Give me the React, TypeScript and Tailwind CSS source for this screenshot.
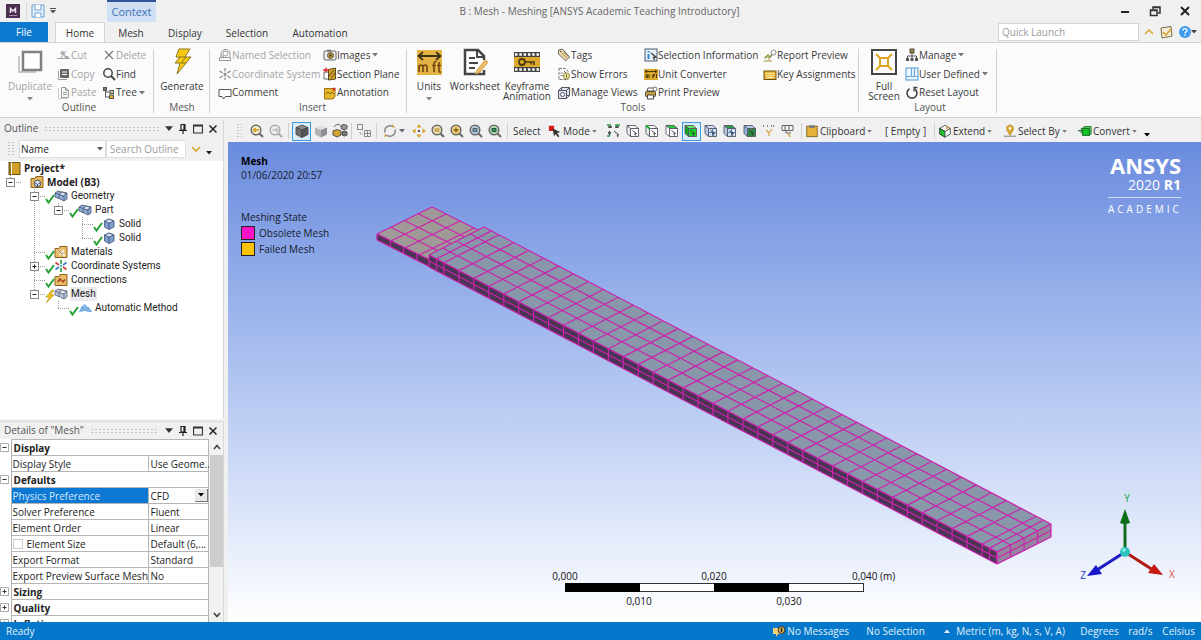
import React from "react";
import clsx from "clsx";

// 14 x 14 glyphs for the ribbon and the tree
const glyphs: Record<string, React.ReactNode> = {
  cut: <g stroke="#a3a3a3" fill="none"><path d="M0 10.500h13M4 10l5-7M8 9 6 4" /><circle cx="5.500" cy="5" r="1.500" fill="#b5b5b5" /><path d="M8 8.500l3.500 1" strokeWidth="2" /></g>,
  copy: <g><path d="M1.500 4v8.500H10" stroke="#999" fill="none" /><rect x="3" y="2" width="9" height="9" rx="1" fill="#666" /><path d="M5 5h5M5 7.500h5" stroke="#fff" /></g>,
  paste: <g fill="none" stroke="#999"><path d="M1.500 2v10.500H10" stroke="#ccc" /><path d="M4.500 1.500h4l3 3v7h-7zM8.500 1.500v3h3M6 6.500h4M6 8.500h4" /></g>,
  del: <path d="M3 3l8 8M11 3l-8 8" stroke="#777" strokeWidth="1.200" />,
  find: <g fill="none" stroke="#444" strokeWidth="1.500"><circle cx="6" cy="6" r="4.200" /><path d="M9 9l4 4" strokeWidth="2" /></g>,
  tree: <g fill="none" stroke="#555"><path d="M3.500 3v8H7M3.500 6H9" /><rect x="1.500" y="1.500" width="3" height="3" fill="#777" /><rect x="8" y="4.500" width="3.500" height="3" fill="#cfd8a0" /><rect x="7.500" y="9" width="4" height="3.500" fill="#e2ab21" /></g>,
  named: <g fill="none" stroke="#999"><path d="M1.500 9.500h11v3h-11zM3 9V4l3-2.500h3L12 4v5" /><circle cx="7.500" cy="5.500" r="2.500" /><path d="M3 7l3 2" /></g>,
  axes: <g stroke="#888" strokeWidth="1.200"><path d="M7 1v12M1.500 4l11 7M12.500 4l-11 7" strokeDasharray="3.500 1.200" /></g>,
  comment: <path d="M1 3.500h12v7H7.500l-2 2.500-1.500-2.500H1z" fill="#fff" stroke="#555" />,
  images: <g><rect x="1" y="3" width="12" height="9" rx="1" fill="#eee" stroke="#666" /><path d="M4 2.500h4" stroke="#666" strokeWidth="1.500" /><circle cx="7.500" cy="7.500" r="3" fill="#c99b2c" stroke="#555" /><circle cx="7.500" cy="7.500" r="1.200" fill="#444" /></g>,
  section: <g><path d="M1 5h5v7H1z" fill="#fff" stroke="#666" /><path d="M5.500 2.500L12.500 1v11l-7 1z" fill="#d6a12c" stroke="#5c4a20" /><path d="M6 9l5-6M8 11l4-5" stroke="#5c4a20" /><path d="M0 3h6M3 .5v5" stroke="#d22" strokeWidth="1.300" /></g>,
  annotation: <g><path d="M1.500 2.500h10.500v8l-2 2.500h-8.500z" fill="#e4b528" stroke="#9a7415" /><path d="M3 8l2-2 2 2 2-2 2 2" fill="none" stroke="#8a6509" /><circle cx="11" cy="3" r="1.500" fill="#d22" /></g>,
  tags: <g><path d="M1.500 2l4-1 7 8-4 4-7-7z" fill="#ead8a5" stroke="#666" /><path d="M5 5l4.500 5M7 4l4 4.500" stroke="#9a8a55" /><circle cx="3.800" cy="3.500" r=".8" fill="#555" /></g>,
  errors: <g><path d="M2 1.500h6.500l2.500 3v8H2z" fill="#fff" stroke="#777" strokeDasharray="3 1" /><path d="M3.500 6h3M3.500 8.500h3" stroke="#888" /><circle cx="9.500" cy="9" r="3" fill="#f3e5a8" stroke="#9b8a3a" /><path d="M9.500 7.500v3M7 4l2 2" stroke="#55702b" /></g>,
  views: <g fill="#dce3ec" stroke="#556"><path d="M4.500 1.500h8v8h-8z" /><path d="M1.500 4.500h8v8h-8zM1.500 4.500l3-3M9.500 4.500l3-3M9.500 12.500l3-3" /><circle cx="5.500" cy="8.500" r="2" fill="#fff" /></g>,
  info: <g><rect x="1" y="1" width="12" height="12" fill="#e6f1fb" stroke="#4a5a6a" /><path d="M4.500 6v5M4.500 3v1.500" stroke="#2f87d6" strokeWidth="2" /><path d="M7 5l5 4-2.500.300 1 2.700" fill="none" stroke="#333" strokeWidth="1.200" /></g>,
  convert: <g><rect x="0" y="2" width="14" height="11" fill="#dba82c" /><path d="M1 4.500h12M3 3L1 4.500 3 6M11 3l2 1.500L11 6M2 11V8h3v3M3.500 8v3M9 11V7.500h2M8 9h3M12.500 7v4" fill="none" stroke="#4b3808" /></g>,
  print: <g><path d="M4 2h6l1 3H3z" fill="#fff" stroke="#555" /><rect x="1.500" y="5.500" width="10" height="5" rx="1" fill="#c9a23a" stroke="#444" /><path d="M3.500 9h6v4h-6z" fill="#fff" stroke="#444" /><circle cx="11" cy="3" r="2" fill="#fff" stroke="#777" /></g>,
  report: <g fill="none"><path d="M1 12h8M2 8h4v3" stroke="#a58a2a" /><path d="M1.500 9.500L5 6l2 2 2-3" stroke="#7ea23c" strokeWidth="1.300" /><circle cx="10.500" cy="3.500" r="2.500" stroke="#888" /><path d="M9 6l-1.500 2.500" stroke="#888" /></g>,
  keys: <g><rect x="1" y="3" width="12" height="8.500" fill="#edb93c" stroke="#6b5214" /><path d="M3 5.500h8M3 7.500h8" stroke="#fff3c8" strokeDasharray="1.500 .7" /><path d="M4 9.500h6" stroke="#fff3c8" /></g>,
  manage: <g><path d="M7 5v3M2.500 11V8h9v3M7 8v3" fill="none" stroke="#555" /><rect x="5" y="1" width="4" height="4" fill="#9a7a2d" stroke="#555" /><rect x="1" y="10" width="3" height="3" fill="#555" /><rect x="5.500" y="10" width="3" height="3" fill="#555" /><rect x="10" y="10" width="3" height="3" fill="#555" /></g>,
  user: <g fill="#eef7fd" stroke="#66aadd" strokeWidth="1.200"><rect x="1" y="1" width="12" height="12" /><path d="M6.500 1v8.500M9.500 1v8.500M1 9.500h12" /></g>,
  reset: <g fill="none" stroke="#444" strokeWidth="1.600"><path d="M4.500 2.800A5 5 0 1 0 9.800 3" /><path d="M12.500 1.500H9v4" strokeWidth="1.300" /></g>,
  book: <g><rect x="2" y="1.500" width="11" height="12" fill="#d2a02a" stroke="#6e5313" /><path d="M4.500 1.500v12" stroke="#fff" /><path d="M3 1.500v12" stroke="#6e5313" /></g>,
  model: <g><path d="M1 3.500h4l1-2h7v11H1z" fill="#e7b658" stroke="#8c6120" /><circle cx="7.500" cy="8.500" r="3.300" fill="#dce6f2" stroke="#456" /><path d="M5 8l2.500 1.500L10 8M7.500 9.500V12" stroke="#456" fill="none" /></g>,
  solids: <g stroke="#44546e" strokeWidth=".8"><path d="M1 4l3-2 4 1 5 1v6l-3 2-4-2-5-2z" fill="#8faed6" /><path d="M1 4l4 1.500v4.500M5 5.500L8 3M6.500 6l3.500 1.200V12M10 7l3-3" fill="none" /><path d="M5 5.500L8 3l4 1.200-2 2.800-3.500-1z" fill="#dbe7f6" /></g>,
  meshes: <g stroke="#5a6478" strokeWidth=".8"><path d="M1 4l3-2 4 1 5 1v6l-3 2-4-2-5-2z" fill="#b9c4d8" /><path d="M1 4l4 1.500v4.500M5 5.500L8 3M6.500 6l3.500 1.200V12M10 7l3-3" fill="none" /><path d="M5 5.500L8 3l4 1.200-2 2.800-3.500-1z" fill="#eef2f8" /></g>,
  solid: <g stroke="#3f5070" strokeWidth=".8"><path d="M2.500 4L7 2l5 2v6l-5 2.500L2.500 10z" fill="#7c9fd0" /><path d="M2.500 4L7 6l5-2-5-2z" fill="#d5e3f5" /><path d="M7 6v6.500" /></g>,
  materials: <g><path d="M1 3.500h4l1-2h7v11H1z" fill="#e9bd68" stroke="#8c6120" /><path d="M4 5l7 6M6 10l4-5" stroke="#f8f4ea" strokeWidth="2" /><path d="M4 5l5 4.500" stroke="#8a5a20" /></g>,
  coords: <g strokeWidth="1.600"><path d="M7 1v4M7 9v4" stroke="#2d9e3d" /><path d="M1.500 3.500L5 6M9 8l3.500 2.500" stroke="#d23b3b" /><path d="M12.500 3.500L9 6M5 8l-3.500 2.500" stroke="#3a7bd0" /><circle cx="7" cy="7" r="1.300" fill="#4fc0c0" /></g>,
  connections: <g><path d="M1 3.500h4l1-2h7v11H1z" fill="#e9bd68" stroke="#8c6120" /><path d="M4 9l2-3 3 3 2-2.500" fill="none" stroke="#a8401d" strokeWidth="1.500" /></g>,
  method: <g fill="#86bfee" stroke="#4a90d0" strokeWidth=".7"><path d="M1.500 10.500l2.500-5 2.500 4z" /><path d="M4 6l3-2.500L10 8 6.500 9.500z" /><path d="M8 10l2-4 3.500 4.500z" /></g>,
  check: <path d="M3 8l2.500 3.500L11 4" fill="none" stroke="#27a035" strokeWidth="2" />,
  bolt: <path d="M9 1L3 8h3.500L3.500 13.500 11 6H7.500L11 1z" fill="#f8c81c" stroke="#b88b12" strokeWidth=".7" />,
};

const Glyph = ({ name, className }: { name: string; className?: string }) => (
  <svg viewBox="0 0 14 14" className={clsx("size-3.5 shrink-0", className)} aria-hidden="true">
    {glyphs[name]}
  </svg>
);

const Caret = ({ className }: { className?: string }) => (
  <svg viewBox="0 0 6 4" className={clsx("h-1 w-1.5 shrink-0", className)} aria-hidden="true">
    <path d="M0 0h6L3 3.500z" fill="currentColor" />
  </svg>
);

/* ---------- Ribbon ---------- */

type CommandProps = { icon: string; label: string; disabled?: boolean; menu?: boolean };

const Command = ({ icon, label, disabled, menu }: CommandProps) => (
  <button
    type="button"
    disabled={disabled}
    className={clsx("flex h-[19px] items-center whitespace-nowrap", disabled ? "text-[#a3a3a3]" : "text-[#3a3a3a]")}
  >
    <Glyph name={icon} />
    <span>{label}</span>
    {menu && <Caret className="ml-0.5 text-[#777]" />}
  </button>
);

const Commands = ({ items, className }: { items: CommandProps[]; className: string }) => (
  <div className={clsx("flex shrink-0 flex-col", className)}>
    {items.map((item) => <Command key={item.label} {...item} />)}
  </div>
);

type BigProps = { label: string; className: string; disabled?: boolean; menu?: boolean; children: React.ReactNode };

const BigCommand = ({ label, className, disabled, menu, children }: BigProps) => (
  <button
    type="button"
    disabled={disabled}
    className={clsx("flex shrink-0 flex-col items-center", disabled ? "text-[#a3a3a3]" : "text-[#3a3a3a]", className)}
  >
    <svg viewBox="0 0 28 28" className="mt-0.5 size-7" aria-hidden="true">{children}</svg>
    <span className="mt-[5px] leading-[10px]">{label}</span>
    {menu && <Caret className="mt-1.5 text-[#888]" />}
  </button>
);

const Group = ({ label, className, children }: { label: string; className: string; children: React.ReactNode }) => (
  <section aria-label={label} className={clsx("relative flex shrink-0 flex-col pt-[3px]", className)}>
    <div className="flex h-14">{children}</div>
    <div className="text-center leading-[10px] text-[#555]">{label}</div>
    <div className="absolute top-1.5 right-0 h-16 w-px bg-[#d0d0d0]" />
  </section>
);

const Ribbon = () => (
  <div className="flex h-[76px] shrink-0 border-y border-[#d2d3d5] bg-[#fbfbfb]">
    <Group label="Outline" className="w-[154px] pl-1">
      <BigCommand label="Duplicate" className="w-[52px]" disabled menu>
        <path d="M3 8v16h17" fill="none" stroke="#c8c8c8" strokeWidth="2" />
        <rect x="7" y="4" width="18" height="18" fill="#fff" stroke="#808080" strokeWidth="2.500" />
      </BigCommand>
      <Commands className="w-[46px] pl-px" items={[
        { icon: "cut", label: "Cut", disabled: true },
        { icon: "copy", label: "Copy", disabled: true },
        { icon: "paste", label: "Paste", disabled: true },
      ]} />
      <Commands className="w-[50px]" items={[
        { icon: "del", label: "Delete", disabled: true },
        { icon: "find", label: "Find" },
        { icon: "tree", label: "Tree", menu: true },
      ]} />
    </Group>
    <Group label="Mesh" className="w-14">
      <BigCommand label="Generate" className="w-14">
        <path d="M11 1h11l-5 8h6L9 26l3-11H7l5-6H8z" fill="#f7cb13" stroke="#8a741c" />
        <path d="M12 9h6l-5 6h5" fill="none" stroke="#8a741c" />
      </BigCommand>
    </Group>
    <Group label="Insert" className="w-[197px] pl-2">
      <Commands className="w-[105px]" items={[
        { icon: "named", label: "Named Selection", disabled: true },
        { icon: "axes", label: "Coordinate System", disabled: true },
        { icon: "comment", label: "Comment" },
      ]} />
      <Commands className="w-20" items={[
        { icon: "images", label: "Images", menu: true },
        { icon: "section", label: "Section Plane" },
        { icon: "annotation", label: "Annotation" },
      ]} />
    </Group>
    <Group label="Tools" className="w-[452px]">
      <BigCommand label="Units" className="w-11" menu>
        <rect x="2" y="2" width="25" height="25" fill="#e3b443" />
        <path d="M4 8h21M8 4L3.500 8 8 12M21 4l4.500 4-4.500 4" fill="none" stroke="#3d3418" strokeWidth="1.800" />
        <path d="M4 24v-7m0 2c1-2.500 4-2.500 4 0v5m0-5c1-2.500 4-2.500 4 0v5M19 24v-8c0-2 1-2.500 2.500-2.500M17 17.500h4M24 14v9c0 1 1 1.300 2 1M22 17.500h4" fill="none" stroke="#7b4a16" strokeWidth="1.700" />
      </BigCommand>
      <BigCommand label="Worksheet" className="w-12">
        <path d="M23 12V8l-6-6H4v24h19v-4" fill="#fff" stroke="#454545" strokeWidth="2.500" />
        <path d="M16 2v7h7M8 10h6M8 15h9M8 20h6" fill="none" stroke="#454545" strokeWidth="2" />
        <path d="M24 12l3 2-8 10-4 2 1-4z" fill="#e9bc6b" stroke="#d9a548" />
      </BigCommand>
      <BigCommand label="Keyframe Animation" className="w-14">
        <rect x="1" y="4" width="26" height="20" fill="#434343" />
        <path d="M2 6.500h24M2 21.500h24" stroke="#fff" strokeWidth="2.500" strokeDasharray="2.500 1.800" />
        <rect x="1" y="9" width="26" height="10" fill="#dda92c" />
        <circle cx="9" cy="14" r="3" fill="none" stroke="#4a3a10" strokeWidth="1.800" />
        <path d="M12 14h9v3M18 14v2.500" fill="none" stroke="#4a3a10" strokeWidth="1.600" />
      </BigCommand>
      <Commands className="w-[89px] pl-0.5" items={[
        { icon: "tags", label: "Tags" },
        { icon: "errors", label: "Show Errors" },
        { icon: "views", label: "Manage Views" },
      ]} />
      <Commands className="w-[119px]" items={[
        { icon: "info", label: "Selection Information" },
        { icon: "convert", label: "Unit Converter" },
        { icon: "print", label: "Print Preview" },
      ]} />
      <Commands className="w-[92px]" items={[
        { icon: "report", label: "Report Preview" },
        { icon: "keys", label: "Key Assignments" },
      ]} />
    </Group>
    <Group label="Layout" className="w-[138px] pl-1">
      <BigCommand label="Full Screen" className="w-[42px] px-1">
        <rect x="2" y="2" width="24" height="24" fill="#fff" stroke="#454545" strokeWidth="2" />
        <path d="M10 10h8v8h-8zM10 10L6 6M18 10l4-4M10 18l-4 4M18 18l4 4" fill="none" stroke="#dba520" strokeWidth="2" />
      </BigCommand>
      <Commands className="w-[88px]" items={[
        { icon: "manage", label: "Manage", menu: true },
        { icon: "user", label: "User Defined", menu: true },
        { icon: "reset", label: "Reset Layout" },
      ]} />
    </Group>
  </div>
);

/* ---------- Window header ---------- */

const tabs = [
  { label: "Mesh", width: "w-[52px]" },
  { label: "Display", width: "w-14" },
  { label: "Selection", width: "w-[68px]" },
  { label: "Automation", width: "w-[78px]" },
];

const Header = () => (
  <header className="shrink-0">
    <div className="flex h-[22px] items-center">
      <svg viewBox="0 0 14 14" className="ml-1.5 size-3.5" aria-hidden="true">
        <rect width="14" height="14" fill="#4b2f4e" />
        <path d="M4.500 9V4.500L7 7l2.500-2.500V9" fill="none" stroke="#f2e6f2" strokeWidth="1.500" />
        <path d="M3 11.500h8" stroke="#a98aa9" />
      </svg>
      <div className="ml-1.5 h-[18px] w-px bg-[#dcdcde]" />
      <button type="button" aria-label="Save" className="ml-1">
        <svg viewBox="0 0 14 14" className="size-3.5">
          <path d="M1 1h12v12H1z" fill="#e4f0fb" stroke="#6b9fd4" />
          <path d="M4 1v5h6V1M4 13V9h6v4" fill="#fff" stroke="#6b9fd4" />
        </svg>
      </button>
      <button type="button" aria-label="Customize" className="ml-1 flex w-2 flex-col items-center gap-px text-[#555]">
        <div className="h-px w-1.5 bg-[#555]" />
        <Caret />
      </button>
      <button type="button" className="ml-[50px] h-full w-[49px] border-t-2 border-[#33549b] bg-[#cfdff4] text-[11px] text-[#4472b8]">
        Context
      </button>
      <h1 className="flex-1 truncate pr-[70px] text-center text-[10px] text-[#666]">B : Mesh - Meshing [ANSYS Academic Teaching Introductory]</h1>
      <div className="flex w-[88px] items-center gap-[18px] pl-1.5">
        <button type="button" aria-label="Minimize">
          <svg viewBox="0 0 12 12" className="size-3"><path d="M2 7h8" stroke="#222" strokeWidth="2" /></svg>
        </button>
        <button type="button" aria-label="Restore">
          <svg viewBox="0 0 12 12" className="size-3">
            <path d="M4 4V2h7v6H8.500M4 2.500h7" fill="none" stroke="#333" strokeWidth="1.500" />
            <path d="M1.500 5h6.500v5.500H1.500zM1.500 5.500h6.500" fill="none" stroke="#333" strokeWidth="1.500" />
          </svg>
        </button>
        <button type="button" aria-label="Close">
          <svg viewBox="0 0 12 12" className="size-3"><path d="M2 2l8 8M10 2l-8 8" stroke="#222" strokeWidth="2" /></svg>
        </button>
      </div>
    </div>
    <nav className="flex h-5 items-end">
      <button type="button" className="h-5 w-12 bg-[#0c78ce] text-white">File</button>
      <button type="button" className="-mb-px ml-[7px] h-[21px] w-[50px] border border-b-0 border-[#d2d3d5] bg-[#fbfbfb] text-[#333]">Home</button>
      {tabs.map((tab) => (
        <button key={tab.label} type="button" className={clsx("h-5 pt-0.5 text-[#333]", tab.width)}>{tab.label}</button>
      ))}
      <div className="flex-1" />
      <div className="flex h-5 items-center">
        <input
          aria-label="Quick Launch"
          placeholder="Quick Launch"
          className="h-[18px] w-[141px] border border-[#d5d5d5] bg-white px-[3px] outline-none placeholder:text-[#9a9a9a]"
        />
        <button type="button" aria-label="Collapse ribbon" className="ml-1">
          <svg viewBox="0 0 12 12" className="size-3"><path d="M2 8l4-4 4 4" fill="none" stroke="#d9a62e" strokeWidth="1.500" /></svg>
        </button>
        <button type="button" aria-label="Feedback" className="ml-1">
          <svg viewBox="0 0 14 14" className="size-3.5">
            <path d="M2 3l10-1.500L13 11 3 13z" fill="#f5eedb" stroke="#7a6a45" />
            <path d="M4 7l3 3 5-6" fill="none" stroke="#dda22a" strokeWidth="1.600" />
          </svg>
        </button>
        <button type="button" aria-label="Help" className="mr-1 ml-1.5 flex items-center text-[#444]">
          <svg viewBox="0 0 12 12" className="size-3">
            <circle cx="6" cy="6" r="6" fill="#3f9cec" />
            <path d="M4 4.500C4 2 8 2 8 4.500 8 6 6 5.800 6 7.500M6 8.500v1.500" fill="none" stroke="#fff" strokeWidth="1.300" />
          </svg>
          <Caret />
        </button>
      </div>
    </nav>
  </header>
);

/* ---------- Outline panel ---------- */

const Dots = ({ className }: { className?: string }) => (
  <div className={clsx("bg-[radial-gradient(#c4c4c8_1px,transparent_1px)] bg-[size:4px_3px]", className)} />
);

const PanelTitle = ({ title }: { title: string }) => (
  <div className="flex h-[17px] shrink-0 items-center gap-1.5 pr-1.5 pl-1 text-[#555]">
    <h2 className="whitespace-nowrap">{title}</h2>
    <Dots className="h-1.5 flex-1" />
    <button type="button" aria-label="Panel menu" className="text-[#333]"><Caret className="h-1.5 w-2" /></button>
    <button type="button" aria-label="Pin">
      <svg viewBox="0 0 8 10" className="h-2.5 w-2"><path d="M2 .5h4V6H2zM0 6.500h8M4 7v3M5 1v5" fill="none" stroke="#222" strokeWidth="1.200" /></svg>
    </button>
    <button type="button" aria-label="Maximize">
      <svg viewBox="0 0 10 10" className="size-2.5"><path d="M.5 1h9v8h-9zM.5 2h9" fill="none" stroke="#333" strokeWidth="1.200" /></svg>
    </button>
    <button type="button" aria-label="Close panel">
      <svg viewBox="0 0 8 8" className="size-2"><path d="M.5.5l7 7M7.500.500l-7 7" stroke="#222" strokeWidth="1.500" /></svg>
    </button>
  </div>
);

// one cell per tree level: blank, a passing line, a branch, a last branch, an open or closed node
type Guide = " " | "|" | "+" | "L" | "-" | "p" | "e";

const GuideCell = ({ kind }: { kind: Guide }) => (
  <svg viewBox="0 0 24 14" className="h-3.5 w-6 shrink-0" aria-hidden="true">
    <g stroke="#999" strokeDasharray="1 1">
      {"|+-p".includes(kind) && <path d="M12.500 0v14" />}
      {"Le".includes(kind) && <path d="M12.500 0v7" />}
      {"+L-pe".includes(kind) && <path d="M12 7.500h12" />}
    </g>
    {"-pe".includes(kind) && (
      <>
        <rect x="8.500" y="3.500" width="8" height="8" fill="#fff" stroke="#888" />
        <path d="M10.500 7.500h4" stroke="#222" />
        {kind === "p" && <path d="M12.500 5.500v4" stroke="#222" />}
      </>
    )}
  </svg>
);

const nodes: { guides: Guide[]; icon: string; label: string; state?: string; bold?: boolean; selected?: boolean }[] = [
  { guides: ["e"], icon: "model", label: "Model (B3)", bold: true },
  { guides: [" ", "-"], icon: "solids", label: "Geometry", state: "check" },
  { guides: [" ", "|", "e"], icon: "solids", label: "Part", state: "check" },
  { guides: [" ", "|", " ", "+"], icon: "solid", label: "Solid", state: "check" },
  { guides: [" ", "|", " ", "L"], icon: "solid", label: "Solid", state: "check" },
  { guides: [" ", "+"], icon: "materials", label: "Materials", state: "check" },
  { guides: [" ", "p"], icon: "coords", label: "Coordinate Systems", state: "check" },
  { guides: [" ", "+"], icon: "connections", label: "Connections", state: "check" },
  { guides: [" ", "e"], icon: "meshes", label: "Mesh", state: "bolt", selected: true },
  { guides: [" ", " ", "L"], icon: "method", label: "Automatic Method", state: "check" },
];

const Outline = () => (
  <section aria-label="Outline" className="flex min-h-0 flex-1 flex-col border-r border-[#d8d8da]">
    <PanelTitle title="Outline" />
    <div className="flex h-6 shrink-0 items-center pl-[7px]">
      <Dots className="h-4 w-2" />
      <div className="relative ml-1 h-[18px] w-[87px] bg-white">
        <select aria-label="Filter by" className="h-full w-full appearance-none border border-[#dedede] px-px text-[#222] outline-none">
          <option>Name</option>
        </select>
        <Caret className="pointer-events-none absolute top-[7px] right-[3px] text-[#555]" />
      </div>
      <input
        aria-label="Search Outline"
        placeholder="Search Outline"
        className="h-[18px] w-20 border border-[#dedede] bg-white px-[3px] outline-none placeholder:text-[#9a9a9a]"
      />
      <button type="button" aria-label="Expand filters" className="ml-1">
        <svg viewBox="0 0 12 12" className="size-3"><path d="M2 4l4 4 4-4" fill="none" stroke="#d9a62e" strokeWidth="1.600" /></svg>
      </button>
      <Caret className="mt-2 ml-1 text-[#222]" />
    </div>
    <ul className="min-h-0 flex-1 overflow-hidden bg-white leading-[14px] text-[#222]">
      <li className="flex h-3.5 items-center gap-[3px] pl-[7px] font-bold">
        <Glyph name="book" />
        Project*
      </li>
      {nodes.map((node, i) => (
        <li key={i} className="-ml-0.5 flex h-3.5 items-center">
          {node.guides.map((kind, level) => <GuideCell key={level} kind={kind} />)}
          <span className="flex w-2 shrink-0 justify-center">
            {node.state && <Glyph name={node.state} className="mt-1" />}
          </span>
          <Glyph name={node.icon} />
          <span className={clsx("ml-0.5 px-px", node.bold ? "font-bold" : "font-[Roboto,sans-serif]", node.selected && "bg-[#ebebee]")}>
            {node.label}
          </span>
        </li>
      ))}
    </ul>
  </section>
);

/* ---------- Details panel ---------- */

type Row = { section?: string; open?: boolean; name?: string; value?: string; kind?: "select" | "check" };

const rows: Row[] = [
  { section: "Display", open: true },
  { name: "Display Style", value: "Use Geome..." },
  { section: "Defaults", open: true },
  { name: "Physics Preference", value: "CFD", kind: "select" },
  { name: "Solver Preference", value: "Fluent" },
  { name: "Element Order", value: "Linear" },
  { name: "Element Size", value: "Default (6,...", kind: "check" },
  { name: "Export Format", value: "Standard" },
  { name: "Export Preview Surface Mesh", value: "No" },
  { section: "Sizing" },
  { section: "Quality" },
  { section: "Inflation" },
];

const DetailRow = ({ row }: { row: Row }) => {
  if (row.section) {
    return (
      <tr className="h-4">
        <td>
          <button type="button" aria-label={`Toggle ${row.section}`} className="block">
            <svg viewBox="0 0 9 9" className="size-[9px]">
              <path d="M.5.500h8v8h-8z" fill="#fff" stroke="#aaa" />
              <path d={row.open ? "M2.500 4.500h4" : "M2.500 4.500h4M4.500 2.500v4"} stroke="#333" />
            </svg>
          </button>
        </td>
        <th colSpan={2} scope="rowgroup" className="border border-[#b5b5b5] px-0.5 text-left font-bold">{row.section}</th>
      </tr>
    );
  }
  return (
    <tr className="h-4">
      <td />
      <th scope="row" className={clsx("border border-[#b5b5b5] pl-px text-left font-normal whitespace-nowrap", row.kind === "select" && "bg-[#0c78d4] text-[#d5e9fa]")}>
        {row.kind === "check" ? (
          <label className="flex items-center gap-1">
            <input type="checkbox" className="size-2.5 appearance-none border border-[#ccc] bg-white" />
            {row.name}
          </label>
        ) : row.name}
      </th>
      <td className="border border-[#b5b5b5] pl-0.5 whitespace-nowrap">
        {row.kind === "select" ? (
          <div className="relative h-[15px]">
            <select aria-label={row.name} className="h-full w-full appearance-none outline-none">
              <option>{row.value}</option>
            </select>
            <span className="pointer-events-none absolute inset-y-px right-0 flex w-[13px] items-center justify-center border-r border-b border-[#777] bg-[#e8e8e8]">
              <Caret className="text-black" />
            </span>
          </div>
        ) : row.value}
      </td>
    </tr>
  );
};

const Details = () => (
  <section aria-label="Details" className="flex h-[201px] shrink-0 flex-col border-t border-r border-[#d8d8da]">
    <PanelTitle title={'Details of "Mesh"'} />
    <div className="flex min-h-0 flex-1 overflow-hidden bg-white">
      <div className="min-w-0 flex-1 overflow-hidden">
        <table className="w-full table-fixed border-collapse leading-[14px] text-[#222]">
          <colgroup>
            <col className="w-[11px]" />
            <col className="w-[137px]" />
            <col />
          </colgroup>
          <tbody>
            {rows.map((row, i) => <DetailRow key={i} row={row} />)}
          </tbody>
        </table>
      </div>
      <div className="flex w-3.5 shrink-0 flex-col items-center bg-[#f1f1f1] pl-px">
        <svg viewBox="0 0 8 14" className="h-4 w-2"><path d="M1 9l3-3.500L7 9" fill="none" stroke="#444" strokeWidth="1.600" /></svg>
        <div className="h-28 w-full bg-[#cdcdcd]" />
        <div className="flex-1" />
        <svg viewBox="0 0 8 14" className="h-3.5 w-2"><path d="M1 5l3 3.500L7 5" fill="none" stroke="#444" strokeWidth="1.600" /></svg>
      </div>
    </div>
  </section>
);

/* ---------- Graphics toolbar ---------- */

const lens = (fill: string, mark: React.ReactNode, stroke = "#6b6b6b") => (
  <>
    <path d="M10.500 10.500l3.500 3.500" stroke={stroke} strokeWidth="2.200" />
    <circle cx="7" cy="7" r="4.800" fill={fill} stroke={stroke} strokeWidth="1.500" />
    {mark}
  </>
);

const cube = (front: string, top: string, side: string, extra?: React.ReactNode) => (
  <g stroke="#556" strokeWidth=".9">
    <path d="M5.500 5.500h8v8h-8z" fill={front} />
    <path d="M2 2.500h8l3.500 3h-8z" fill={top} />
    <path d="M2 2.500l3.500 3v8L2 10.500z" fill={side} />
    {extra}
    <path d="M7.500 7.500l4 3-1.800.200 1 2" fill="none" stroke="#333" />
  </g>
);

const shade = (a: string, b: string, c: string) => (
  <>
    <path d="M2 4.500L8 2l6 2.500L8 7z" fill={a} />
    <path d="M2 4.500L8 7v7.500L2 11.500z" fill={b} />
    <path d="M14 4.500L8 7v7.500l6-3z" fill={c} />
  </>
);

const tools: Record<string, React.ReactNode> = {
  "Zoom previous": lens("#f5ecd0", <path d="M10 7H4.500M6.500 5l-2 2 2 2" fill="none" stroke="#d39a1c" strokeWidth="1.500" />),
  "Zoom next": lens("#eee", <path d="M4.500 7H10M8 5l2 2-2 2" fill="none" stroke="#bbb" strokeWidth="1.300" />, "#aaa"),
  "Shaded with edges": <g stroke="#444" strokeWidth=".8">{shade("#8a8a8a", "#6c6c6c", "#555")}</g>,
  "Shaded": shade("#e2e2e4", "#b5b5b9", "#8e8e94"),
  "Explode": <g stroke="#444" strokeWidth=".9"><path d="M9 2.500l3-1 3 1v3l-3 1.500-3-1.500z" fill="#999" /><path d="M1 8l4-1.500 4 1.500v4l-4 2-4-2z" fill="#d5a531" /><path d="M10 9l2.500-1L15 9v3l-2.500 1L10 12z" fill="#777" /><path d="M2 4c2-3 4-3 6-2" fill="none" /></g>,
  "Display layout": <g fill="none" stroke="#8a8a8a"><rect x="1.500" y="1.500" width="5" height="5" /><path d="M4 9v2h3" strokeDasharray="1 1" /><path d="M8.500 7.500h6v6h-6zM11.500 7.500v6M8.500 10.500h6" /></g>,
  "Rotate": <g fill="none" strokeWidth="1.500"><path d="M3 9.500A5.300 5.300 0 0 1 11.500 4" stroke="#888" /><path d="M13 6.500A5.300 5.300 0 0 1 4.500 12" stroke="#888" /><path d="M10 2l2.500 2.500M3.500 14L3.300 11" stroke="#d7a13a" /></g>,
  "Pan": <g fill="#d8a028"><path d="M8 1l2.500 3.500h-5zM8 15l2.500-3.500h-5zM1 8l3.500-2.500v5zM15 8l-3.500-2.500v5z" /><rect x="7" y="7" width="2" height="2" fill="#555" /></g>,
  "Zoom": lens("#f0dfae", <path d="M4.500 6h5M4.500 8h5" stroke="#a97d1c" />),
  "Box zoom": lens("#f2d57c", <path d="M4.500 7h5M7 4.500v5" stroke="#7e5d10" strokeWidth="1.300" />),
  "Zoom to fit": lens("#b9cbe2", <path d="M5 5.500h4v3H5z" fill="#7d95b8" stroke="#466" />),
  "Zoom selection": lens("#b6d8b2", <path d="M5 5.500h4v3H5z" fill="#2f9c3c" stroke="#255" />),
  "Smart select": <g stroke="#444"><path d="M2 4h4M4 2v3M9 4h4M11 2v3M2 10h3M3.500 8v5" strokeWidth="1.300" /><path d="M1 2h4M9 2h5M1 13h3" stroke="#2ea43c" strokeWidth="1.500" /><path d="M8 8l5 4-2 .2 1 2" fill="none" /></g>,
  "Vertex": cube("#fff", "#fff", "#f0f0f0"),
  "Edge": cube("#fff", "#fff", "#e8f4e8", <path d="M2 2.500l3.500 3" stroke="#15b52a" strokeWidth="2" />),
  "Face": cube("#fff", "#1fce31", "#fff"),
  "Body": cube("#18cf2b", "#5ae667", "#11a922"),
  "Node": cube("#cfe0f5", "#cfe0f5", "#b7cde9", <path d="M9.500 5.500v8M5.500 9.500h8" stroke="#4c78b0" />),
  "Element face": cube("#cfe0f5", "#2a9b46", "#b7cde9", <path d="M9.500 5.500v8M5.500 9.500h8" stroke="#4c78b0" />),
  "Element": cube("#2d8a44", "#b7cde9", "#8fb3dd"),
  "Coordinates": <g><path d="M2 3h2M6 3h2M10 3h3" stroke="#888" strokeDasharray="1 1" strokeWidth="2" /><path d="M5 7l3 3 3-4M8 10v3" stroke="#d6a64a" fill="none" strokeWidth="1.200" /></g>,
  "Label": <g fill="none" stroke="#666"><path d="M2 2.500h11v5H2zM5 2.500v5M9 2.500v5M6 8v2h5" /><path d="M8 10l2 4" stroke="#d6a64a" strokeWidth="1.500" /></g>,
  "Mode": <g><rect x="1" y="2" width="6" height="6" fill="#d81c1c" /><path d="M5 5l9 4-3.500 1.200L13 14l-1.500 1-2.800-3.500L7 14z" fill="#333" /></g>,
  "Clipboard": <g><rect x="2" y="2.500" width="12" height="12" fill="#e5b23b" stroke="#7b6127" /><rect x="5" y="1.500" width="6" height="3" fill="#777" /></g>,
  "Extend": <g stroke="#333" strokeWidth=".9"><path d="M2 5l6-3.500L14 5v6.500L8 15l-6-3.500z" fill="#fff" /><path d="M2 5l6 3.500V15l-6-3.500z" fill="#20c832" /><path d="M2 5l6 3.500L14 5" fill="none" /><path d="M9 4.500h3" stroke="#e0a82a" strokeWidth="2" /></g>,
  "Select By": <g><path d="M1 14h14" stroke="#999" strokeWidth="1.500" /><path d="M8 13L4.500 7a4 4 0 1 1 7 0z" fill="#e0a82a" stroke="#a97b1a" strokeWidth=".7" /><circle cx="8" cy="5" r="1.500" fill="#fff" /></g>,
  "Convert": <g><path d="M5 5l2-2h8v8l-2 2z" fill="#6ce377" stroke="#0d5c17" /><path d="M5 5h8v8H5z" fill="#17c22a" stroke="#0d5c17" /><path d="M0 7.500h5M3 5l3 2.500L3 10" fill="none" stroke="#2c7a35" strokeWidth="1.300" /></g>,
};

const Tool = ({ name, active }: { name: string; active?: boolean }) => (
  <button type="button" aria-label={name} className={clsx("flex h-[19px] w-[19px] shrink-0 items-center justify-center", active && "border border-[#3b9be3] bg-[#dcecf9]")}>
    <svg viewBox="0 0 16 16" className="size-4 shrink-0">{tools[name]}</svg>
  </button>
);

const TextTool = ({ name, className }: { name: string; className: string }) => (
  <button type="button" className={clsx("flex shrink-0 items-center whitespace-nowrap", className)}>
    <svg viewBox="0 0 16 16" className="mr-px size-3.5">{tools[name]}</svg>
    {name}
    <Caret className="ml-0.5 h-[3px] w-[5px] text-[#777]" />
  </button>
);

const Sep = ({ tight }: { tight?: boolean }) => (
  <div className={clsx("h-4 w-px shrink-0 bg-[#cfcfcf]", tight ? "mx-0.5" : "mx-[3px]")} />
);

const picks = ["Smart select", "Vertex", "Edge", "Face", "Body", "Node", "Element face", "Element", "Coordinates", "Label"];

const Toolbar = () => (
  <div className="flex h-[22px] shrink-0 items-center overflow-hidden pl-2 text-[#333]">
    <Dots className="h-4 w-1.5 shrink-0" />
    <div className="ml-[5px] flex"><Tool name="Zoom previous" /><Tool name="Zoom next" /></div>
    <Sep />
    <Tool name="Shaded with edges" active />
    <Tool name="Shaded" />
    <Tool name="Explode" />
    <Sep tight />
    <Tool name="Display layout" />
    <Sep />
    <Tool name="Rotate" />
    <Caret className="mr-1 text-[#667]" />
    {["Pan", "Zoom", "Box zoom", "Zoom to fit", "Zoom selection"].map((name) => <Tool key={name} name={name} />)}
    <Sep />
    <span className="ml-0.5 w-[35px] shrink-0">Select</span>
    <TextTool name="Mode" className="w-[56px]" />
    <div className="flex w-[194px] shrink-0 justify-between">
      {picks.map((name) => <Tool key={name} name={name} active={name === "Body"} />)}
    </div>
    <Sep />
    <TextTool name="Clipboard" className="w-[80px]" />
    <span className="w-[46px] shrink-0 whitespace-nowrap">[ Empty ]</span>
    <Sep />
    <TextTool name="Extend" className="w-[65px]" />
    <TextTool name="Select By" className="w-[75px]" />
    <TextTool name="Convert" className="w-[66px]" />
    <Caret className="mt-2 text-black" />
  </div>
);

/* ---------- Model view ---------- */

type Pt = [number, number];

const mix = (a: Pt, b: Pt, t: number): Pt => [a[0] + (b[0] - a[0]) * t, a[1] + (b[1] - a[1]) * t];
const seg = (a: Pt, b: Pt) => `M${a[0].toFixed(1)} ${a[1].toFixed(1)}L${b[0].toFixed(1)} ${b[1].toFixed(1)}`;

// grid lines of a quad a-b-c-d: us run along a-b, vs run along a-d
const grid = ([a, b, c, d]: Pt[], us: number[], vs: number[]) =>
  us.map((u) => seg(mix(a, b, u), mix(d, c, u))).join("") + vs.map((v) => seg(mix(a, d, v), mix(b, c, v))).join("");

const range = (n: number) => Array.from({ length: n + 1 }, (_, i) => i / n);

// half cells at both ends of the long bar
const barSteps = [...range(38), 0.5 / 38, 37.5 / 38];

const faces: { quad: Pt[]; fill: string; us: number[]; vs: number[] }[] = [
  { quad: [[377, 234], [433, 262], [488, 235], [432, 207]], fill: "#9f9998", us: range(4), vs: range(4) },
  { quad: [[377, 234], [430, 260], [430, 267], [377, 240]], fill: "#493553", us: range(4), vs: range(1) },
  { quad: [[429, 255], [997, 552], [1051, 524], [484, 227]], fill: "#8997ab", us: barSteps, vs: range(4) },
  { quad: [[429, 255], [997, 552], [997, 564], [429, 267]], fill: "#493553", us: barSteps, vs: range(2) },
  { quad: [[997, 552], [1051, 524], [1051, 537], [997, 564]], fill: "#94839f", us: range(4), vs: range(2) },
];

const Model = () => (
  <svg viewBox="228 142 973 480" preserveAspectRatio="xMidYMid meet" className="absolute inset-0 h-full w-full" role="img" aria-label="Meshed bar">
    {faces.map((face, i) => (
      <g key={i}>
        <polygon points={face.quad.map((p) => p.join(",")).join(" ")} fill={face.fill} />
        <path d={grid(face.quad, face.us, face.vs)} stroke="#cb22ae" strokeWidth="1.200" fill="none" />
      </g>
    ))}

    {/* Scale */}
    <rect x="565.500" y="583.500" width="298" height="8" fill="#fff" stroke="#333" />
    <rect x="565" y="583" width="75" height="9" fill="#000" />
    <rect x="714" y="583" width="75" height="9" fill="#000" />
    <g className="text-[10px]" fill="#111" textAnchor="middle">
      <text x="565" y="580">0,000</text>
      <text x="714" y="580">0,020</text>
      <text x="852" y="580" textAnchor="start">0,040 (m)</text>
      <text x="639" y="605">0,010</text>
      <text x="789" y="605">0,030</text>
    </g>

    {/* Triad */}
    <g strokeWidth="3">
      <path d="M1125 552V522" stroke="#116b1c" />
      <path d="M1125 552l28 18" stroke="#b01a10" />
      <path d="M1125 552l-28 18" stroke="#1c1cc4" />
    </g>
    <path d="M1125 509l5 14q-5 2-10 0z" fill="#0c6d18" />
    <path d="M1163 575l-15-2 6-9z" fill="#c51a10" />
    <path d="M1087 576l9-11 6 9z" fill="#1515cc" />
    <circle cx="1125" cy="552" r="5" fill="#2cc3bd" />
    <circle cx="1124" cy="550" r="1.800" fill="#8cf0ea" />
    <g className="text-[10px]" textAnchor="middle">
      <text x="1127" y="502" fill="#24a544">Y</text>
      <text x="1172" y="578" fill="#e85040">X</text>
      <text x="1083" y="579" fill="#2a35c8">Z</text>
    </g>
  </svg>
);

const Viewport = () => (
  <main className="relative min-h-0 flex-1 overflow-hidden bg-linear-to-b from-[#6a8bde] to-white text-[#151a2c]">
    <Model />
    <div className="absolute top-3 left-[13px] leading-[14px]">
      <div className="font-bold text-black">Mesh</div>
      <div>01/06/2020 20:57</div>
      <div className="mt-7 mb-px">Meshing State</div>
      <div className="flex h-4 items-center gap-1"><span className="size-3.5 border border-[#222] bg-[#fc12c4]" />Obsolete Mesh</div>
      <div className="flex h-4 items-center gap-1"><span className="size-3.5 border border-[#222] bg-[#fcc302]" />Failed Mesh</div>
    </div>
    <div className="absolute top-[11px] right-5 flex flex-col items-end text-white">
      <div className="text-[22px] leading-6 font-bold">ANSYS</div>
      <div className="text-[14px] leading-4">2020 <b>R1</b></div>
      <div className="mt-1 w-[73px] border-t border-[#cfdcf8] pt-[5px] text-[10px] leading-3 tracking-[3px]">ACADEMIC</div>
    </div>
  </main>
);

const StatusBar = () => (
  <footer className="flex h-[18px] shrink-0 items-center bg-[#0478ca] pr-1.5 pl-1.5 whitespace-nowrap text-[#e2f0fb]">
    <span className="flex-1">Ready</span>
    <span className="flex w-[94px] items-center gap-px">
      <svg viewBox="0 0 14 12" className="h-3 w-3.5" aria-hidden="true">
        <path d="M1 3h9v6H6l-2 3V9H1z" fill="#f3cf73" />
        <circle cx="9.500" cy="5" r="3.500" fill="#d8b04a" stroke="#333" />
        <path d="M9.500 3v4" stroke="#222" strokeWidth="1.500" />
      </svg>
      No Messages
    </span>
    <span className="w-[78px]">No Selection</span>
    <span className="flex w-[136px] items-center gap-1.5"><Caret className="rotate-180" />Metric (m, kg, N, s, V, A)</span>
    <span className="w-12">Degrees</span>
    <span className="w-[34px]">rad/s</span>
    <span>Celsius</span>
  </footer>
);

export default function App() {
  return (
    <div className="flex h-screen flex-col overflow-hidden bg-[#f0f0f1] font-['Open_Sans','Noto_Sans',sans-serif] text-[10px]">
      <Header />
      <Ribbon />
      <div className="flex min-h-0 flex-1 pt-[2px]">
        <aside className="flex w-56 shrink-0 flex-col gap-[2px]">
          <Outline />
          <Details />
        </aside>
        <div className="ml-1 flex min-w-0 flex-1 flex-col">
          <Toolbar />
          <Viewport />
        </div>
      </div>
      <StatusBar />
    </div>
  );
}
